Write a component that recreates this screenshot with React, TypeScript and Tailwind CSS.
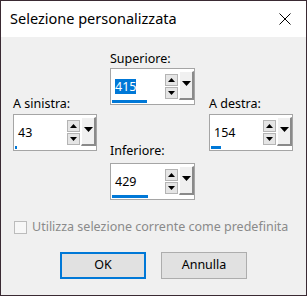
import React from "react";

const font = { fontFamily: '"Noto Sans", "Open Sans", sans-serif' };

function Arrow({ up = false, w = 7, h = 4 }: { up?: boolean; w?: number; h?: number }) {
  const pts = up ? `0,${h} ${w},${h} ${w / 2},0` : `0,0 ${w},0 ${w / 2},${h}`;
  return (
    <svg width={w} height={h} viewBox={`0 0 ${w} ${h}`}>
      <polygon points={pts} fill="#000" />
    </svg>
  );
}

function SpinBox({
  value,
  selected = false,
  bar,
}: {
  value: string;
  selected?: boolean;
  bar: number;
}) {
  return (
    <div className="flex h-[37px] w-full border border-[#a5a5a5] bg-white">
      {/* edit area + range bar */}
      <div className="flex flex-1 flex-col pl-[1px] pb-[1px]">
        <div className="flex flex-1 items-center pl-[3px] pt-[3px]">
          <span
            className={
              selected
                ? "bg-[#0078d7] text-[12.5px] leading-[15px] text-white"
                : "text-[12.5px] leading-[15px] text-black"
            }
          >
            {value}
          </span>
        </div>
        <div className="h-[3px] bg-[#0078d7]" style={{ width: bar }} />
      </div>

      {/* up / down */}
      <div className="flex flex-col gap-[1px] pt-[5px] pr-[1px]">
        <div className="flex h-[12px] w-[13px] items-center justify-center border border-[#b4b4b4] bg-[#e5e5e5]">
          <Arrow up />
        </div>
        <div className="flex h-[12px] w-[13px] items-center justify-center border border-[#b4b4b4] bg-[#e5e5e5]">
          <Arrow />
        </div>
      </div>

      {/* dropdown */}
      <div className="mt-[2px] mb-[4px] flex w-[15px] justify-center border-t border-l border-t-white border-l-white border-r-2 border-b-2 border-r-[#8a8a8a] border-b-[#8a8a8a] bg-[#f0f0f0] pt-[9px]">
        <Arrow w={9} h={5} />
      </div>
    </div>
  );
}

function Field({
  label,
  value,
  bar,
  selected,
  gap,
}: {
  label: string;
  value: string;
  bar: number;
  selected?: boolean;
  gap: string;
}) {
  return (
    <div className="flex flex-col">
      <div className="h-[16px] text-[12.5px] leading-[16px] text-black">{label}</div>
      <div className={gap}>
        <SpinBox value={value} bar={bar} selected={selected} />
      </div>
    </div>
  );
}

export default function App() {
  return (
    <div
      className="flex h-[296px] w-[307px] flex-col border border-[#3a2a33] bg-[#f0f0f0]"
      style={font}
    >
      {/* title bar */}
      <div className="flex h-[36px] items-center bg-white">
        <div className="flex-1 pl-[9px] text-[14.5px] text-black">Selezione personalizzata</div>
        <div className="flex h-full w-[42px] items-center justify-center">
          <svg width="12" height="12" viewBox="0 0 12 12">
            <path d="M0.5 0.5 L11.5 11.5 M11.5 0.5 L0.5 11.5" stroke="#000" strokeWidth="1" />
          </svg>
        </div>
      </div>

      {/* fields */}
      <div className="flex h-[163px] gap-[13px] pl-[12px]">
        <div className="w-[84px] pt-[59px]">
          <Field label="A sinistra:" value="43" bar={2} gap="mt-[2px]" />
        </div>
        <div className="flex w-[85px] flex-col pt-[14px]">
          <Field label="Superiore:" value="415" bar={35} selected gap="mt-[1px]" />
          <div className="mt-[38px]">
            <Field label="Inferiore:" value="429" bar={36} gap="mt-[4px]" />
          </div>
        </div>
        <div className="ml-[1px] w-[84px] pt-[59px]">
          <Field label="A destra:" value="154" bar={10} gap="mt-[2px]" />
        </div>
      </div>

      {/* checkbox */}
      <div className="mt-[19px] flex h-[16px] items-center gap-[5px] pl-[13px]">
        <div className="h-[13px] w-[13px] border border-[#bcbcbc] bg-[#f7f7f7]" />
        <span className="text-[12.5px] leading-[16px] text-[#8a8a8a]">
          Utilizza selezione corrente come predefinita
        </span>
      </div>

      {/* buttons */}
      <div className="mt-[17px] flex justify-center gap-[15px]">
        <button className="flex h-[27px] w-[86px] items-center justify-center border-2 border-[#0078d7] bg-[#e1e1e1] text-[12.5px] text-black">
          OK
        </button>
        <button className="flex h-[27px] w-[86px] items-center justify-center border border-[#adadad] bg-[#e1e1e1] text-[12.5px] text-black">
          Annulla
        </button>
      </div>
    </div>
  );
}
